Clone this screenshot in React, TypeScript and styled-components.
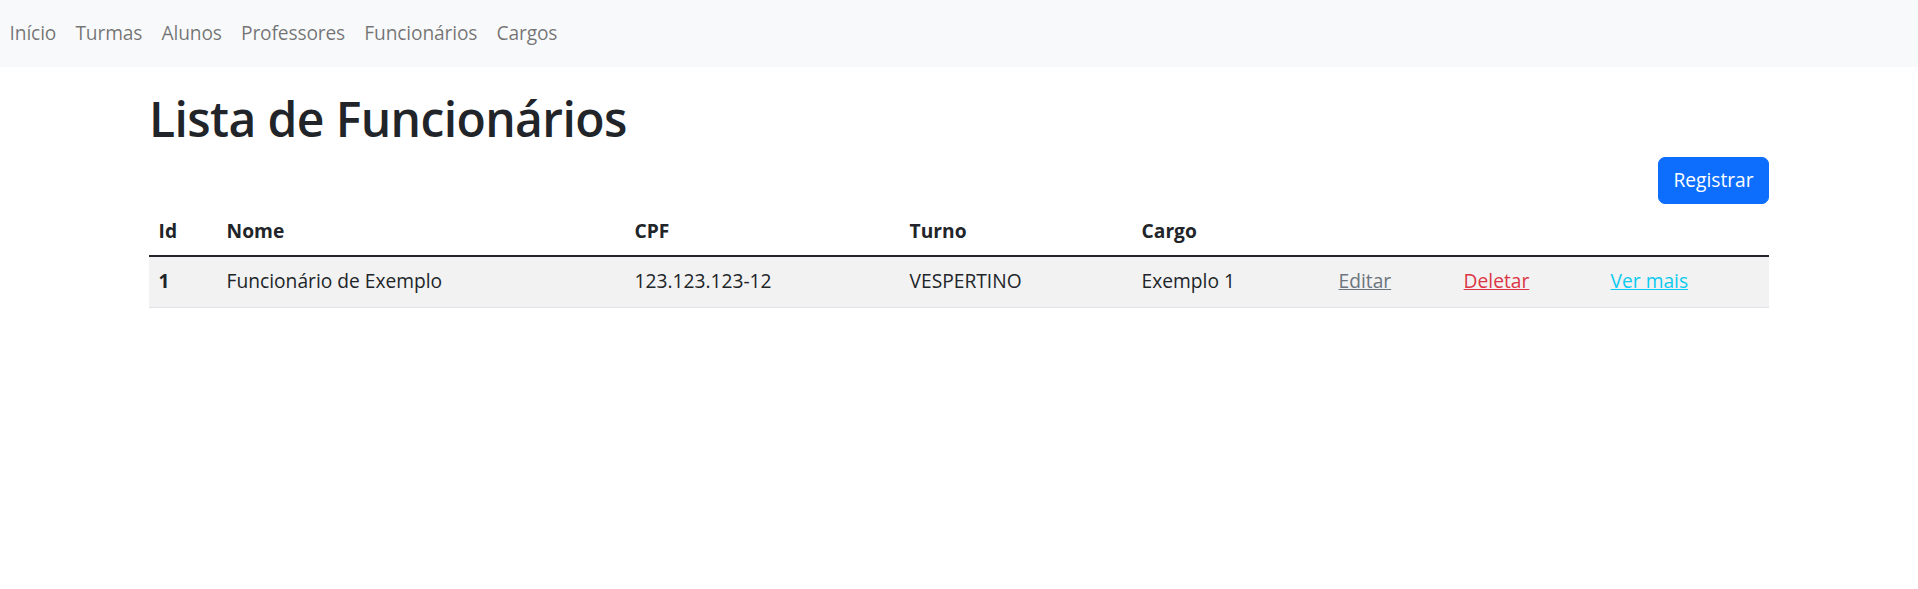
import React from "react";
import styled, { createGlobalStyle } from "styled-components";

const Global = createGlobalStyle`
  html, body { margin: 0; padding: 0; background: #fff; }
  body {
    font-family: "Segoe UI", "Open Sans", "Noto Sans", sans-serif;
    font-size: 19.2px;
    line-height: 1.5;
    color: #212529;
  }
  * { box-sizing: border-box; }
`;

const NavBar = styled.nav`
  background: #f8f9fa;
  height: 67px;
  padding: 9.6px 0;
  display: flex;
  align-items: center;
`;

const NavList = styled.ul`
  list-style: none;
  margin: 0;
  padding: 0;
  display: flex;
`;

const NavLink = styled.a`
  display: block;
  padding: 9.6px 9.6px;
  color: rgba(0, 0, 0, 0.55);
  text-decoration: none;
  line-height: 28.8px;
  letter-spacing: -0.15px;
`;

const Container = styled.main`
  max-width: 1620px;
  margin: 0 auto;
`;

const Title = styled.h1`
  font-size: 48px;
  font-weight: 600;
  line-height: 1.2;
  letter-spacing: -0.6px;
  margin: 23px 0 9.6px;
  color: #212529;
`;

const Actions = styled.div`
  display: flex;
  justify-content: flex-end;
  margin-bottom: 4px;
`;

const Button = styled.button`
  font: inherit;
  line-height: 28.8px;
  padding: 8px 14.4px;
  border: 1px solid #0d6efd;
  border-radius: 7px;
  background: #0d6efd;
  color: #fff;
  cursor: pointer;
`;

const Table = styled.table`
  width: 100%;
  border-collapse: collapse;
  table-layout: fixed;
  color: #212529;
`;

const Th = styled.th<{ $w: number }>`
  width: ${(p) => p.$w}px;
  text-align: left;
  font-weight: 700;
  padding: 8.6px 9.6px 9.6px;
  line-height: 28.8px;
  border-bottom: 2px solid #212529;
`;

const Tr = styled.tr`
  background: #f2f2f2;
  border-bottom: 1px solid #dee2e6;
`;

const Td = styled.td<{ $bold?: boolean }>`
  padding: 10.4px 9.6px;
  line-height: 28.8px;
  font-weight: ${(p) => (p.$bold ? 700 : 400)};
  white-space: nowrap;
`;

const ActionLink = styled.a<{ $color: string }>`
  color: ${(p) => p.$color};
  text-decoration: underline;
`;

const columns: [string, number][] = [
  ["Id", 68],
  ["Nome", 408],
  ["CPF", 275],
  ["Turno", 232],
  ["Cargo", 197],
  ["", 125],
  ["", 147],
  ["", 168],
];

const navItems = ["Início", "Turmas", "Alunos", "Professores", "Funcionários", "Cargos"];

export default function App() {
  return (
    <>
      <Global />
      <NavBar>
        <NavList>
          {navItems.map((n) => (
            <li key={n}>
              <NavLink href="#">{n}</NavLink>
            </li>
          ))}
        </NavList>
      </NavBar>
      <Container>
        <Title>Lista de Funcionários</Title>
        <Actions>
          <Button>Registrar</Button>
        </Actions>
        <Table>
          <thead>
            <tr>
              {columns.map(([c, w], i) => (
                <Th key={i} $w={w}>
                  {c}
                </Th>
              ))}
            </tr>
          </thead>
          <tbody>
            <Tr>
              <Td $bold>1</Td>
              <Td>Funcionário de Exemplo</Td>
              <Td>123.123.123-12</Td>
              <Td>VESPERTINO</Td>
              <Td>Exemplo 1</Td>
              <Td>
                <ActionLink href="#" $color="#6c757d">Editar</ActionLink>
              </Td>
              <Td>
                <ActionLink href="#" $color="#dc3545">Deletar</ActionLink>
              </Td>
              <Td>
                <ActionLink href="#" $color="#0dcaf0">Ver mais</ActionLink>
              </Td>
            </Tr>
          </tbody>
        </Table>
      </Container>
    </>
  );
}
